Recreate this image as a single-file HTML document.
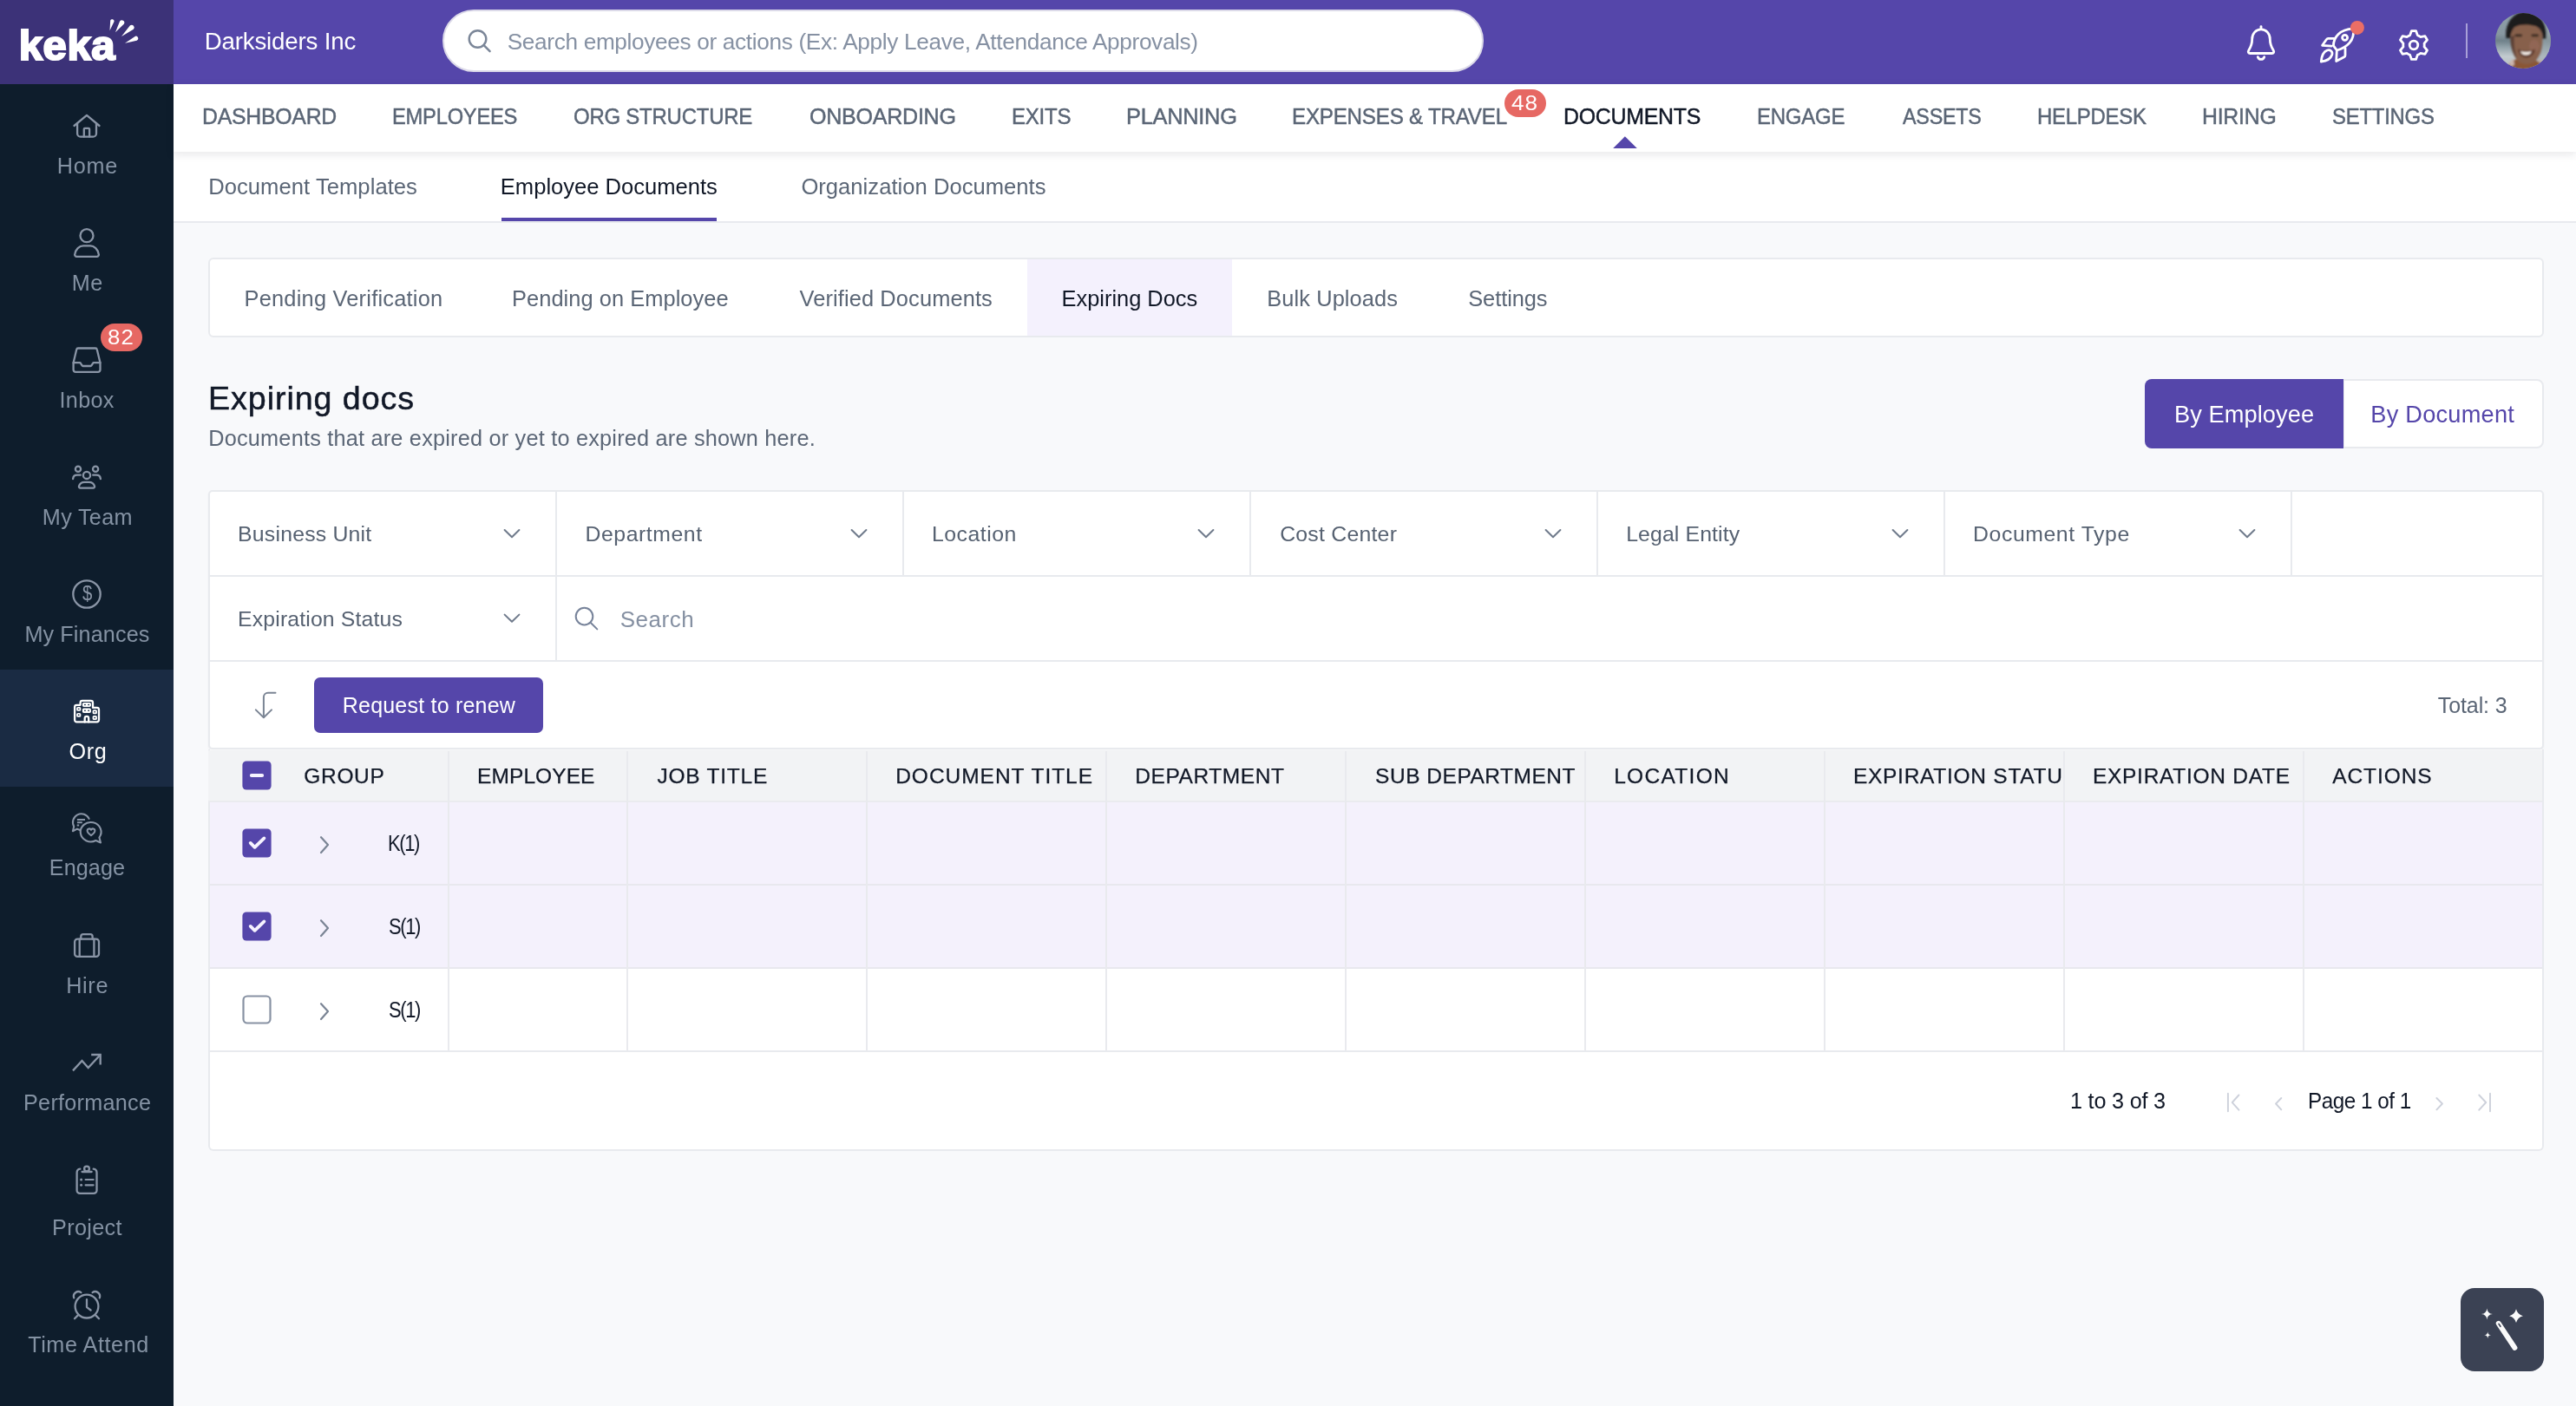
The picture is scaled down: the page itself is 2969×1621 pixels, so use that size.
<!DOCTYPE html>
<html lang="en"><head><meta charset="utf-8"><title>Keka - Expiring docs</title>
<style>
html,body{margin:0;padding:0}
html{background:#f8f9fb}
body{width:2969px;height:1621px;position:relative;overflow:hidden;background:#f8f9fb;font-family:"Liberation Sans",sans-serif}
.a{position:absolute;box-sizing:border-box}
.t{position:absolute;white-space:nowrap;line-height:1}
.ln{position:absolute;background:#e8eaee}
</style></head><body>
<!-- sidebar -->
<div class="a" style="left:0;top:0;width:200px;height:1621px;background:#0e1d2c"></div>
<div class="a" style="left:0;top:0;width:200px;height:97px;background:#3c3278"></div>
<div class="a" style="left:0;top:772px;width:200px;height:135px;background:#1a2b43"></div>
<!-- header -->
<div class="a" style="left:200px;top:0;width:2769px;height:97px;background:#5546aa"></div>
<div class="a" style="left:510px;top:11px;width:1200px;height:72px;border-radius:36px;background:#fff;border:2px solid #dcdae9"></div>
<!-- sub tabs -->
<div class="a" style="left:200px;top:175px;width:2769px;height:82px;background:#fff;border-bottom:2px solid #e8eaee"></div>
<div class="a" style="left:578px;top:251px;width:248px;height:4px;background:#5546aa"></div>
<!-- nav -->
<div class="a" style="left:200px;top:97px;width:2769px;height:78px;background:#fff;box-shadow:0 3px 10px rgba(20,20,40,.10)"></div>
<div class="a" style="left:1734px;top:103px;width:48px;height:32px;border-radius:16px;background:#e66863"></div>
<div class="a" style="left:116px;top:373px;width:48px;height:32px;border-radius:16px;background:#e66863"></div>
<!-- tab card -->
<div class="a" style="left:240px;top:297px;width:2692px;height:92px;background:#fff;border:2px solid #e8eaee;border-radius:6px"></div>
<div class="a" style="left:1184px;top:299px;width:236px;height:88px;background:#f4f1fd"></div>
<!-- toggle -->
<div class="a" style="left:2700px;top:437px;width:232px;height:80px;background:#fff;border:2px solid #e8eaee;border-radius:0 8px 8px 0"></div>
<div class="a" style="left:2472px;top:437px;width:229px;height:80px;background:#5546aa;border-radius:8px 0 0 8px"></div>
<!-- main card -->
<div class="a" style="left:240px;top:864px;width:2692px;height:463px;background:#fff;border:2px solid #e8eaee;border-top:none;border-radius:0 0 6px 6px"></div>
<div class="a" style="left:240px;top:565px;width:2692px;height:299px;background:#fff;border:2px solid #e8eaee;border-radius:5px;box-shadow:0 1px 2px rgba(30,40,60,.05)"></div>
<!-- filter rows lines -->
<div class="ln" style="left:242px;top:663px;width:2688px;height:2px"></div>
<div class="ln" style="left:242px;top:761px;width:2688px;height:2px"></div>
<div class="ln" style="left:640px;top:567px;width:2px;height:194px"></div>
<div class="ln" style="left:1040px;top:567px;width:2px;height:96px"></div>
<div class="ln" style="left:1440px;top:567px;width:2px;height:96px"></div>
<div class="ln" style="left:1840px;top:567px;width:2px;height:96px"></div>
<div class="ln" style="left:2240px;top:567px;width:2px;height:96px"></div>
<div class="ln" style="left:2640px;top:567px;width:2px;height:96px"></div>
<!-- request button -->
<div class="a" style="left:362px;top:781px;width:264px;height:64px;background:#5546aa;border-radius:7px"></div>
<!-- table header -->
<div class="a" style="left:240px;top:865px;width:2690px;height:60px;background:#f2f3f5;border-bottom:2px solid #eaebef"></div>
<!-- rows -->
<div class="a" style="left:242px;top:925px;width:2688px;height:96px;background:#f4f1fc;border-bottom:2px solid #e8e8ee"></div>
<div class="a" style="left:242px;top:1021px;width:2688px;height:96px;background:#f4f1fc;border-bottom:2px solid #e8e8ee"></div>
<div class="a" style="left:242px;top:1117px;width:2688px;height:96px;background:#fff;border-bottom:2px solid #e8eaee"></div>
<!-- col dividers -->
<div class="ln" style="left:516px;top:866px;width:2px;height:346px;background:#e9eaee"></div><div class="ln" style="left:722px;top:866px;width:2px;height:346px;background:#e9eaee"></div><div class="ln" style="left:998px;top:866px;width:2px;height:346px;background:#e9eaee"></div><div class="ln" style="left:1274px;top:866px;width:2px;height:346px;background:#e9eaee"></div><div class="ln" style="left:1550px;top:866px;width:2px;height:346px;background:#e9eaee"></div><div class="ln" style="left:1826px;top:866px;width:2px;height:346px;background:#e9eaee"></div><div class="ln" style="left:2102px;top:866px;width:2px;height:346px;background:#e9eaee"></div><div class="ln" style="left:2378px;top:866px;width:2px;height:346px;background:#e9eaee"></div><div class="ln" style="left:2654px;top:866px;width:2px;height:346px;background:#e9eaee"></div>
<!-- wand button -->
<div class="a" style="left:2836px;top:1485px;width:96px;height:96px;background:#3b4254;border-radius:16px"></div>
<!-- avatar -->
<svg class="a" style="left:2876px;top:15px" width="64" height="64" viewBox="0 0 64 64">
<defs><clipPath id="avc"><circle cx="32" cy="32" r="32"/></clipPath>
<filter id="avb" x="-20%" y="-20%" width="140%" height="140%"><feGaussianBlur stdDeviation="1.3"/></filter>
<linearGradient id="avbg" x1="0" y1="0" x2="0" y2="1"><stop offset="0" stop-color="#8fa0a8"/><stop offset=".38" stop-color="#8797a0"/><stop offset=".5" stop-color="#6f818a"/><stop offset=".62" stop-color="#93a3ab"/><stop offset=".78" stop-color="#c3cbcf"/><stop offset="1" stop-color="#b4bcc0"/></linearGradient></defs>
<g clip-path="url(#avc)"><rect width="64" height="64" fill="url(#avbg)"/>
<g filter="url(#avb)">
<rect x="44" y="-2" width="24" height="70" fill="#9aa7ad" opacity=".55"/>
<path d="M14 66 C14 58 20 54 26 53 L40 53 C48 54 54 57 55 66 Z" fill="#8a5636"/>
<path d="M16.5 56 L21 53 L22 60 L17 62 Z" fill="#cdb6ae"/><path d="M50 53 L54.5 55.5 L53 58 L49.5 56 Z" fill="#c7aca2"/>
<path d="M17.5 27 C17 16 24 12 35 12 C47 12 55 17 54.5 30 C54.5 42 52 50 45.5 56 C40.5 59.5 31 59.5 27 56 C20.5 50 18 40 17.5 27 Z" fill="#87604c"/>
<path d="M17.5 27 C17 34 19 46 25 53 C22 44 21 36 22 26 Z" fill="#5b4035"/>
<ellipse cx="45" cy="38" rx="6" ry="7" fill="#96695a" opacity=".7"/>
<path d="M12.5 29 C11 14 18 1 33 -2 C51 -2 61 12 58.5 30 L54.6 30 C55 23 52 17 46 15 C39 13 29 12.5 22.5 16 C18.5 20 17.8 25 17.2 29 Z" fill="#1b1a1c"/>
<rect x="22.5" y="24.6" width="8.5" height="2.6" rx="1.3" fill="#35261f"/><rect x="41.5" y="24.6" width="8.5" height="2.6" rx="1.3" fill="#35261f"/>
<path d="M26 41.5 C30 44 43 44 46 41.5 C45 49 39 51.5 35.5 51.5 C31 51.5 27 48 26 41.5 Z" fill="#5e382b"/>
<path d="M29 44 C32 45 39 45 41.8 44 C41 47.5 38 48.6 35.3 48.6 C32.5 48.6 30 47.5 29 44 Z" fill="#f3ebe6"/>
</g></g></svg>
<div id="tx" style="position:absolute;left:0;top:0;width:2969px;height:1621px;will-change:transform">
<span class="t" style="left:235.63px;top:33.75px;font-size:27.7px;letter-spacing:-0.173px;color:#fff">Darksiders Inc</span>
<span class="t" style="left:584.71px;top:35.10px;font-size:26.2px;letter-spacing:-0.329px;color:#8691a3">Search employees or actions (Ex: Apply Leave, Attendance Approvals)</span>
<span class="t" style="left:232.56px;top:121.55px;font-size:25.5px;letter-spacing:-0.250px;color:#5b6676;transform:scaleX(0.9730);transform-origin:0 0;-webkit-text-stroke:.45px currentColor">DASHBOARD</span>
<span class="t" style="left:451.65px;top:121.55px;font-size:25.5px;letter-spacing:-0.250px;color:#5b6676;transform:scaleX(0.9300);transform-origin:0 0;-webkit-text-stroke:.45px currentColor">EMPLOYEES</span>
<span class="t" style="left:661.46px;top:121.55px;font-size:25.5px;letter-spacing:-0.250px;color:#5b6676;transform:scaleX(0.9405);transform-origin:0 0;-webkit-text-stroke:.45px currentColor">ORG STRUCTURE</span>
<span class="t" style="left:932.91px;top:121.55px;font-size:25.5px;letter-spacing:-0.250px;color:#5b6676;transform:scaleX(0.9821);transform-origin:0 0;-webkit-text-stroke:.45px currentColor">ONBOARDING</span>
<span class="t" style="left:1165.63px;top:121.55px;font-size:25.5px;letter-spacing:-0.250px;color:#5b6676;transform:scaleX(0.9420);transform-origin:0 0;-webkit-text-stroke:.45px currentColor">EXITS</span>
<span class="t" style="left:1298.02px;top:121.55px;font-size:25.5px;letter-spacing:-0.250px;color:#5b6676;transform:scaleX(0.9942);transform-origin:0 0;-webkit-text-stroke:.45px currentColor">PLANNING</span>
<span class="t" style="left:1489.12px;top:121.55px;font-size:25.5px;letter-spacing:-0.250px;color:#5b6676;transform:scaleX(0.9487);transform-origin:0 0;-webkit-text-stroke:.45px currentColor">EXPENSES &amp; TRAVEL</span>
<span class="t" style="left:1802.36px;top:121.55px;font-size:25.5px;letter-spacing:-0.250px;color:#111827;transform:scaleX(0.9756);transform-origin:0 0;-webkit-text-stroke:.45px currentColor">DOCUMENTS</span>
<span class="t" style="left:2025.33px;top:121.55px;font-size:25.5px;letter-spacing:-0.250px;color:#5b6676;transform:scaleX(0.9409);transform-origin:0 0;-webkit-text-stroke:.45px currentColor">ENGAGE</span>
<span class="t" style="left:2192.55px;top:121.55px;font-size:25.5px;letter-spacing:-0.250px;color:#5b6676;transform:scaleX(0.9139);transform-origin:0 0;-webkit-text-stroke:.45px currentColor">ASSETS</span>
<span class="t" style="left:2347.54px;top:121.55px;font-size:25.5px;letter-spacing:-0.250px;color:#5b6676;transform:scaleX(0.9383);transform-origin:0 0;-webkit-text-stroke:.45px currentColor">HELPDESK</span>
<span class="t" style="left:2538.46px;top:121.55px;font-size:25.5px;letter-spacing:-0.250px;color:#5b6676;transform:scaleX(0.9738);transform-origin:0 0;-webkit-text-stroke:.45px currentColor">HIRING</span>
<span class="t" style="left:2688.01px;top:121.55px;font-size:25.5px;letter-spacing:-0.250px;color:#5b6676;transform:scaleX(0.9373);transform-origin:0 0;-webkit-text-stroke:.45px currentColor">SETTINGS</span>
<span class="t" style="left:1742.30px;top:107.45px;font-size:24.5px;letter-spacing:1.000px;color:#fff;transform:scaleX(1.0661);transform-origin:0 0">48</span>
<span class="t" style="left:240.20px;top:203.00px;font-size:25.6px;letter-spacing:0.045px;color:#5b6676">Document Templates</span>
<span class="t" style="left:576.80px;top:203.00px;font-size:25.6px;letter-spacing:-0.015px;color:#111827">Employee Documents</span>
<span class="t" style="left:923.39px;top:203.00px;font-size:25.6px;letter-spacing:0.022px;color:#5b6676">Organization Documents</span>
<span class="t" style="left:281.52px;top:331.50px;font-size:25.4px;letter-spacing:0.221px;color:#5b6676">Pending Verification</span>
<span class="t" style="left:590.02px;top:331.50px;font-size:25.4px;letter-spacing:0.064px;color:#5b6676">Pending on Employee</span>
<span class="t" style="left:921.49px;top:331.50px;font-size:25.4px;letter-spacing:0.127px;color:#5b6676">Verified Documents</span>
<span class="t" style="left:1223.52px;top:331.50px;font-size:25.4px;letter-spacing:0.005px;color:#111827">Expiring Docs</span>
<span class="t" style="left:1460.32px;top:331.50px;font-size:25.4px;letter-spacing:0.090px;color:#5b6676">Bulk Uploads</span>
<span class="t" style="left:1692.25px;top:331.50px;font-size:25.4px;letter-spacing:-0.068px;color:#5b6676">Settings</span>
<span class="t" style="left:240.12px;top:440.60px;font-size:37.6px;letter-spacing:0.946px;color:#111827;-webkit-text-stroke:.5px currentColor">Expiring docs</span>
<span class="t" style="left:240.22px;top:492.75px;font-size:25.3px;letter-spacing:0.203px;color:#5b6676">Documents that are expired or yet to expired are shown here.</span>
<span class="t" style="left:2505.97px;top:464.40px;font-size:27.2px;letter-spacing:0.085px;color:#fff">By Employee</span>
<span class="t" style="left:2732.37px;top:464.40px;font-size:27.2px;letter-spacing:0.223px;color:#5546aa">By Document</span>
<span class="t" style="left:274.07px;top:604.30px;font-size:24.8px;letter-spacing:0.209px;color:#566171">Business Unit</span>
<span class="t" style="left:674.47px;top:604.30px;font-size:24.8px;letter-spacing:0.562px;color:#566171">Department</span>
<span class="t" style="left:1074.07px;top:604.30px;font-size:24.8px;letter-spacing:0.483px;color:#566171">Location</span>
<span class="t" style="left:1475.14px;top:604.30px;font-size:24.8px;letter-spacing:0.246px;color:#566171">Cost Center</span>
<span class="t" style="left:1874.17px;top:604.30px;font-size:24.8px;letter-spacing:0.126px;color:#566171">Legal Entity</span>
<span class="t" style="left:2274.07px;top:604.30px;font-size:24.8px;letter-spacing:0.576px;color:#566171">Document Type</span>
<span class="t" style="left:274.07px;top:702.30px;font-size:24.8px;letter-spacing:0.148px;color:#566171">Expiration Status</span>
<span class="t" style="left:714.72px;top:700.70px;font-size:26px;letter-spacing:0.516px;color:#8590a2">Search</span>
<span class="t" style="left:394.75px;top:800.90px;font-size:25px;letter-spacing:0.209px;color:#fff">Request to renew</span>
<span class="t" style="left:2809.84px;top:801.10px;font-size:25px;letter-spacing:-0.107px;color:#5b6676">Total: 3</span>
<span class="t" style="left:350.37px;top:882.65px;font-size:24.5px;letter-spacing:0.645px;color:#111827;-webkit-text-stroke:.25px currentColor">GROUP</span>
<span class="t" style="left:550.09px;top:882.65px;font-size:24.5px;letter-spacing:0.079px;color:#111827;-webkit-text-stroke:.25px currentColor">EMPLOYEE</span>
<span class="t" style="left:757.42px;top:882.65px;font-size:24.5px;letter-spacing:0.765px;color:#111827;-webkit-text-stroke:.25px currentColor">JOB TITLE</span>
<span class="t" style="left:1032.19px;top:882.65px;font-size:24.5px;letter-spacing:0.976px;color:#111827;-webkit-text-stroke:.25px currentColor">DOCUMENT TITLE</span>
<span class="t" style="left:1308.19px;top:882.65px;font-size:24.5px;letter-spacing:0.582px;color:#111827;-webkit-text-stroke:.25px currentColor">DEPARTMENT</span>
<span class="t" style="left:1585.09px;top:882.65px;font-size:24.5px;letter-spacing:0.520px;color:#111827;-webkit-text-stroke:.25px currentColor">SUB DEPARTMENT</span>
<span class="t" style="left:1860.19px;top:882.65px;font-size:24.5px;letter-spacing:1.298px;color:#111827;-webkit-text-stroke:.25px currentColor">LOCATION</span>
<span class="t" style="left:2411.89px;top:882.65px;font-size:24.5px;letter-spacing:0.733px;color:#111827;-webkit-text-stroke:.25px currentColor">EXPIRATION DATE</span>
<span class="t" style="left:2688.25px;top:882.65px;font-size:24.5px;letter-spacing:0.911px;color:#111827;-webkit-text-stroke:.25px currentColor">ACTIONS</span>
<div style="position:absolute;left:2103px;top:0;width:274px;height:1621px;overflow:hidden"><span class="t" style="left:32.89px;top:882.65px;font-size:24.5px;letter-spacing:0.733px;color:#111827;-webkit-text-stroke:.25px currentColor">EXPIRATION STATUS</span></div>
<span class="t" style="left:447.00px;top:959.90px;font-size:25px;letter-spacing:-1.600px;color:#111827;transform:scaleX(0.8781);transform-origin:0 0">K(1)</span>
<span class="t" style="left:447.60px;top:1055.90px;font-size:25px;letter-spacing:-1.600px;color:#111827;transform:scaleX(0.8780);transform-origin:0 0">S(1)</span>
<span class="t" style="left:447.60px;top:1151.90px;font-size:25px;letter-spacing:-1.600px;color:#111827;transform:scaleX(0.8780);transform-origin:0 0">S(1)</span>
<span class="t" style="left:2385.98px;top:1257.10px;font-size:25px;letter-spacing:-0.200px;color:#111827;transform:scaleX(1.0085);transform-origin:0 0">1 to 3 of 3</span>
<span class="t" style="left:2660.41px;top:1257.10px;font-size:25px;letter-spacing:-0.500px;color:#111827;transform:scaleX(0.9697);transform-origin:0 0">Page 1 of 1</span>
<span class="t" style="left:65.83px;top:178.80px;font-size:25.2px;letter-spacing:0.733px;color:#8492a3">Home</span>
<span class="t" style="left:82.83px;top:313.80px;font-size:25.2px;letter-spacing:0.387px;color:#8492a3">Me</span>
<span class="t" style="left:68.57px;top:448.80px;font-size:25.2px;letter-spacing:0.293px;color:#8492a3">Inbox</span>
<span class="t" style="left:48.83px;top:583.80px;font-size:25.2px;letter-spacing:0.318px;color:#8492a3">My Team</span>
<span class="t" style="left:28.43px;top:718.80px;font-size:25.2px;letter-spacing:0.120px;color:#8492a3">My Finances</span>
<span class="t" style="left:79.41px;top:854.00px;font-size:25.2px;letter-spacing:0.659px;color:#fff">Org</span>
<span class="t" style="left:56.73px;top:988.40px;font-size:25.2px;letter-spacing:0.109px;color:#8492a3">Engage</span>
<span class="t" style="left:76.23px;top:1124.00px;font-size:25.2px;letter-spacing:0.666px;color:#8492a3">Hire</span>
<span class="t" style="left:27.03px;top:1259.00px;font-size:25.2px;letter-spacing:0.278px;color:#8492a3">Performance</span>
<span class="t" style="left:60.03px;top:1403.40px;font-size:25.2px;letter-spacing:0.341px;color:#8492a3">Project</span>
<span class="t" style="left:32.23px;top:1538.40px;font-size:25.2px;letter-spacing:0.552px;color:#8492a3">Time Attend</span>
<span class="t" style="left:124.48px;top:377.10px;font-size:24px;letter-spacing:1.000px;color:#fff;transform:scaleX(1.0765);transform-origin:0 0">82</span>
<span class="t" style="left:21.78px;top:27.70px;font-size:49px;letter-spacing:0.565px;color:#fff;font-weight:700;-webkit-text-stroke:2.2px #fff;paint-order:stroke fill">keka</span>
<span class="t" style="left:94.68px;top:672.45px;font-size:24.5px;letter-spacing:0.000px;color:#8a95a6;transform:scaleX(0.8319);transform-origin:0 0">$</span>
</div>
<svg class="a" style="left:0;top:0" width="2969" height="1621" viewBox="0 0 2969 1621" fill="none" stroke-linecap="round" stroke-linejoin="round">
<g id="logo-rays">
<path fill="#fff" stroke="none" d="M126.5 35.2 Q129.3 29.6 131.6 24.8 A2.3 2.3 0 0 0 127.2 23.6 Q126.9 28.9 126.5 35.2Z"/>
<path fill="#fff" stroke="none" d="M133.0 37.2 Q138.3 32.0 142.8 27.7 A2.8 2.8 0 0 0 138.1 24.6 Q135.8 30.3 133.0 37.2Z"/>
<path fill="#fff" stroke="none" d="M140.0 42.0 Q147.5 37.7 153.9 33.8 A3.0 3.0 0 0 0 150.0 29.3 Q145.3 35.2 140.0 42.0Z"/>
<path fill="#fff" stroke="none" d="M144.0 49.8 Q151.3 48.2 157.6 46.7 A2.6 2.6 0 0 0 155.6 41.9 Q150.2 45.6 144.0 49.8Z"/>
</g>
<g id="side" stroke="#8a95a6" stroke-width="2.3">
<path d="M85.5 145 L100 132.9 L114.5 145"/>
<path d="M89.1 142.5 V153.9 a3.7 3.7 0 0 0 3.7 3.7 H107.3 a3.7 3.7 0 0 0 3.7 -3.7 V142.5"/>
<path d="M96.8 157.6 V148.8 a1 1 0 0 1 1 -1 H102.1 a1 1 0 0 1 1 1 V157.6"/>
<circle cx="100" cy="271.7" r="7.5"/>
<path d="M88.3 295.9 H111.7 a2.2 2.2 0 0 0 2.1 -2.6 C113 287.5 108.5 283.3 104 283.3 H96 C91.5 283.3 87 287.5 86.2 293.3 a2.2 2.2 0 0 0 2.1 2.6 Z"/>
<path d="M84.6 418.2 L88.2 403 a1.9 1.9 0 0 1 1.9 -1.5 H109.9 a1.9 1.9 0 0 1 1.9 1.5 L115.5 418.2 V426.3 a2.5 2.5 0 0 1 -2.5 2.5 H87.1 a2.5 2.5 0 0 1 -2.5 -2.5 Z"/>
<path d="M84.6 418.2 H92 a1 1 0 0 1 .9 .6 L94.6 421.4 a1.2 1.2 0 0 0 1 .6 H104.4 a1.2 1.2 0 0 0 1 -.6 L107.1 418.8 a1 1 0 0 1 .9 -.6 H115.5"/>
<circle cx="90" cy="540.7" r="3.1"/><circle cx="110.1" cy="540.7" r="3.1"/><circle cx="100" cy="547.9" r="4.1"/>
<path d="M92.6 562.7 H107.4 a1.7 1.7 0 0 0 1.6 -2.1 C108.2 557.5 105.3 555.8 102.5 555.8 H97.5 C94.7 555.8 91.8 557.5 91 560.6 a1.7 1.7 0 0 0 1.6 2.1 Z"/>
<path d="M92.8 547.7 H89 C86 547.7 84.3 549.6 84.1 552.1"/><path d="M107.2 547.7 H111 C114 547.7 115.7 549.6 115.9 552.1"/>
<circle cx="100" cy="685" r="15.7"/>
</g>
<g id="org" stroke="#fff" stroke-width="2.3">
<path d="M88.4 832.4 H111.7 a2.3 2.3 0 0 0 2.3 -2.3 V818.2 a2.3 2.3 0 0 0 -2.3 -2.3 H107 V810.2 a2.3 2.3 0 0 0 -2.3 -2.3 H94.9 a2.3 2.3 0 0 0 -2.3 2.3 V812.8 H88.4 a2.3 2.3 0 0 0 -2.3 2.3 V830.1 a2.3 2.3 0 0 0 2.3 2.3 Z"/>
<path d="M97.7 832.4 V828.2 a2.25 2.25 0 0 1 4.5 0 V832.4"/>
</g>
<g id="orgw" fill="#fff" stroke="none">
<rect x="94.9" y="810" width="10" height="4.9" rx="1.6"/>
<rect x="94.9" y="816.6" width="10" height="5.3" rx="1.6"/>
<rect x="88.2" y="814.9" width="5.1" height="4.9" rx="1.6"/>
<rect x="88.2" y="821.9" width="5.1" height="4.9" rx="1.6"/>
<rect x="106.6" y="818.2" width="5.3" height="5.1" rx="1.6"/>
<rect x="106.6" y="824.9" width="5.3" height="5.1" rx="1.6"/>
</g><g id="orgd" fill="#1a2b43" stroke="none">
<rect x="97.11" y="811.8" width="1.7" height="1.4" rx=".4"/>
<rect x="101.30000000000001" y="811.8" width="1.7" height="1.4" rx=".4"/>
<rect x="97.11" y="818.55" width="1.7" height="1.4" rx=".4"/>
<rect x="101.30000000000001" y="818.55" width="1.7" height="1.4" rx=".4"/>
<rect x="89.85000000000001" y="816.6999999999999" width="1.7" height="1.4" rx=".4"/>
<rect x="89.85000000000001" y="823.5999999999999" width="1.7" height="1.4" rx=".4"/>
<rect x="108.35000000000001" y="820.0" width="1.7" height="1.4" rx=".4"/>
<rect x="108.35000000000001" y="826.8" width="1.7" height="1.4" rx=".4"/>
</g>
<g id="side2" stroke="#8a95a6" stroke-width="2.3">
<path d="M102.6 943.9 A9.8 9.8 0 1 0 85.2 952.9 L83.9 958.2 L88.9 955.6 Q90.2 956.3 91.7 956.8" stroke-width="2.1"/>
<path d="M88.9 944.9 H98 M88.9 948.2 H94.8 M88.7 951.6 H91.2" stroke-width="2" stroke-linecap="butt"/>
<path d="M110.4 969 A11.9 11.2 0 1 1 114.4 965.6 L116 971.5 Z" stroke-width="2.1"/>
<path d="M105 963.2 C102.5 961.5 100.6 959.6 100.6 957.8 C100.6 955 104 954.6 105 956.8 C106 954.6 109.4 955 109.4 957.8 C109.4 959.6 107.5 961.5 105 963.2 Z" stroke-width="2"/>
<rect x="86.1" y="1082.6" width="27.9" height="20.25" rx="3.2"/>
<path d="M93.3 1082.6 V1079.7 a2.5 2.5 0 0 1 2.5 -2.5 H104.1 a2.5 2.5 0 0 1 2.5 2.5 V1082.6"/>
<path d="M91.7 1082.6 V1102.8 M108.4 1082.6 V1102.8"/>
<path d="M84 1234.4 L94.5 1222.9 L101.7 1231.1 L115.7 1216" stroke-linecap="butt" stroke-linejoin="miter"/>
<path d="M105.2 1216 H115.7 V1227.6" stroke-linecap="butt" stroke-linejoin="miter"/>
<path d="M92.3 1347.7 Q88.6 1348.2 88.6 1352 V1372.4 a3.5 3.5 0 0 0 3.5 3.5 H108 a3.5 3.5 0 0 0 3.5 -3.5 V1352 Q111.5 1348.2 107.7 1347.7"/>
<circle cx="100" cy="1347.6" r="2.9"/><path d="M94.6 1351 H105.6"/>
<path d="M98.6 1360 H107.6 M98.6 1366.3 H107.6" stroke-width="2.2"/>
<circle cx="93.6" cy="1360" r="1.5" fill="#8a95a6" stroke="none"/><circle cx="93.6" cy="1366.3" r="1.5" fill="#8a95a6" stroke="none"/>
<circle cx="100" cy="1506.1" r="13.4"/>
<path d="M100 1498.2 V1507.1 L104.6 1510.5"/>
<path d="M85.2 1496.3 A5.4 5.4 0 0 1 93.4 1490.1 M106.6 1490.1 A5.4 5.4 0 0 1 114.8 1496.3"/>
<path d="M89.8 1516.4 L86 1520.3 M110.2 1516.4 L114 1520.3"/>
</g>
<g id="hdr" stroke="#fff" stroke-width="2.8">
<path d="M2606 30.6 V33.6"/>
<path d="M2606 33.9 C2600 33.9 2595.7 38.8 2595.7 45 C2595.7 52 2594 54.5 2591.7 58.2 C2590.6 60 2591.6 61.5 2593.4 61.5 H2618.6 C2620.4 61.5 2621.4 60 2620.3 58.2 C2618 54.5 2616.3 52 2616.3 45 C2616.3 38.8 2612 33.9 2606 33.9 Z"/>
<path d="M2602.3 65.7 A3.9 3.9 0 0 0 2609.7 65.7"/>
<path d="M2689.4 52.6 C2689.6 43.6 2696 33.6 2712.3 33.1 C2714.3 46.5 2705 55 2693.4 58 Z"/>
<circle cx="2702.6" cy="43.3" r="3"/>
<path d="M2690.3 44.4 H2683.3 a2 2 0 0 0 -1.7 .9 L2676.6 52.3 L2687.2 53.2"/>
<path d="M2693.3 58.6 L2692.7 70.6 L2701.7 65.8 a2.4 2.4 0 0 0 1.3 -2.1 V55.6"/>
<path d="M2675.3 71 C2675.8 64.5 2678 59.6 2682.2 58 C2685.8 56.8 2688.8 59.6 2687.8 63 C2686.3 67.6 2681.8 70.4 2675.3 71 Z"/>
<path d="M2777.63 40.61 L2779.46 35.60 L2784.54 35.60 L2786.37 40.61 A12.2 12.2 0 0 1 2789.68 42.52 L2794.94 41.60 L2797.48 46.00 L2794.05 50.09 A12.2 12.2 0 0 1 2794.05 53.91 L2797.48 58.00 L2794.94 62.40 L2789.68 61.48 A12.2 12.2 0 0 1 2786.37 63.39 L2784.54 68.40 L2779.46 68.40 L2777.63 63.39 A12.2 12.2 0 0 1 2774.32 61.48 L2769.06 62.40 L2766.52 58.00 L2769.95 53.91 A12.2 12.2 0 0 1 2769.95 50.09 L2766.52 46.00 L2769.06 41.60 L2774.32 42.52 A12.2 12.2 0 0 1 2777.63 40.61 Z"/>
<circle cx="2782.0" cy="52.0" r="4.8"/>
</g>
<circle cx="2716.9" cy="31.9" r="8" fill="#eb6e65" stroke="none"/>
<rect x="2842" y="27" width="2" height="40" fill="#a9a0d8" stroke="none"/>
<g stroke="#7b8698" stroke-width="2.4"><circle cx="550.5" cy="45" r="9.8"/><path d="M557.6 52.2 L564.6 59.2"/></g>
<path d="M1859.2 170.9 L1872.9 157.2 L1886.8 170.9 Z" fill="#5546aa" stroke="none"/>
<g stroke="#6f7a8b" stroke-width="2">
<path d="M581.6 611 L590 619.2 L598.4 611"/>
<path d="M981.6 611 L990 619.2 L998.4 611"/>
<path d="M1381.6 611 L1390 619.2 L1398.4 611"/>
<path d="M1781.6 611 L1790 619.2 L1798.4 611"/>
<path d="M2181.6 611 L2190 619.2 L2198.4 611"/>
<path d="M2581.6 611 L2590 619.2 L2598.4 611"/>
<path d="M581.6 708.6 L590 716.8 L598.4 708.6"/>
</g>
<g stroke="#77839a" stroke-width="2"><circle cx="673.5" cy="710.6" r="9.8"/><path d="M680.6 717.8 L688.3 725.4"/></g>
<g stroke="#7b8594" stroke-width="2"><path d="M317.5 798.8 H308.9 a5 5 0 0 0 -5 5 V826.8"/><path d="M294.8 818.4 L303.9 827.3 L313 818.4"/></g>
<rect x="279.4" y="877.4" width="33.2" height="33.2" rx="4.6" fill="#5546aa" stroke="none"/>
<path d="M289.9 894 H302.1" stroke="#f6f3ff" stroke-width="4.1"/>
<rect x="279.4" y="955.4" width="33.2" height="33.2" rx="4.6" fill="#5546aa" stroke="none"/>
<path d="M288.7 971.9 L293.6 976.8 L304.4 966.4" stroke="#f6f3ff" stroke-width="3.8"/>
<rect x="279.4" y="1051.4" width="33.2" height="33.2" rx="4.6" fill="#5546aa" stroke="none"/>
<path d="M288.7 1067.9 L293.6 1072.8 L304.4 1062.4" stroke="#f6f3ff" stroke-width="3.8"/>
<rect x="280.5" y="1148.5" width="31" height="31" rx="4.5" fill="#fff" stroke="#8892a3" stroke-width="2.2"/>
<g stroke="#7a8494" stroke-width="2.2">
<path d="M370 965.2 L378 974.1 L370 983.0"/>
<path d="M370 1061.1999999999998 L378 1070.1 L370 1079.0"/>
<path d="M370 1157.1999999999998 L378 1166.1 L370 1175.0"/>
</g>
<g stroke="#cdd1db" stroke-width="1.9">
<path d="M2567.9 1260.8 V1281.2 M2580.4 1262.5 L2572.8 1271 L2580.4 1279.7"/>
<path d="M2629.3 1266 L2623.1 1272.5 L2629.3 1279.3"/>
<path d="M2808.4 1266 L2814.9 1272.5 L2808.4 1279.3"/>
<path d="M2857.3 1262.5 L2865.2 1271 L2857.3 1279.7 M2870 1260.8 V1281.2"/>
</g>
<path d="M2879.8 1525.8 L2898.4 1553.8" stroke="#fafafa" stroke-width="6"/>
<path d="M2880 1526.4 L2881.9 1529.3" stroke="#3b4154" stroke-width="1.6"/>
<path fill="#fafafa" stroke="none" d="M2900 1509.3 Q2901.58 1515.62 2907.9 1517.2 Q2901.58 1518.78 2900 1525.1000000000001 Q2898.42 1518.78 2892.1 1517.2 Q2898.42 1515.62 2900 1509.3Z"/>
<path fill="#fafafa" stroke="none" d="M2866.4 1508.4 Q2866.92 1514.38 2872.9 1514.9 Q2866.92 1515.42 2866.4 1521.4 Q2865.88 1515.42 2859.9 1514.9 Q2865.88 1514.38 2866.4 1508.4Z"/>
<path fill="#fafafa" stroke="none" d="M2867.2 1535.2 Q2867.44 1538.96 2871.2 1539.2 Q2867.44 1539.44 2867.2 1543.2 Q2866.96 1539.44 2863.2 1539.2 Q2866.96 1538.96 2867.2 1535.2Z"/>
</svg>
</body></html>
